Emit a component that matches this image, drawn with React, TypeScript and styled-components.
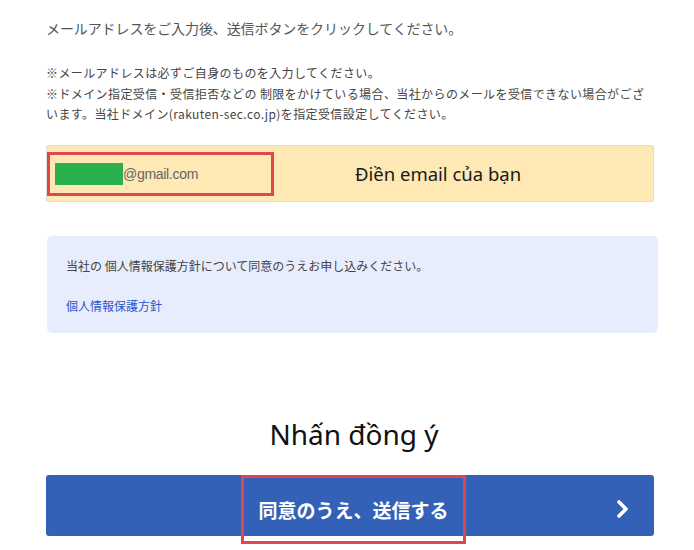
import React from "react";
import styled, { createGlobalStyle } from "styled-components";

const Global = createGlobalStyle`
  html, body { margin: 0; padding: 0; background: #ffffff; }
  body { font-family: "Noto Sans CJK JP", "Noto Sans", sans-serif; }
`;

const Page = styled.div`
  width: 694px;
  height: 550px;
  box-sizing: border-box;
  padding: 0 40px 0 46px;
  overflow: hidden;
  display: flex;
  flex-direction: column;
`;

const Lead = styled.p`
  margin: 17px 0 0;
  font-size: 14px;
  line-height: 22px;
  color: #555555;
  font-family: "Noto Sans CJK JP", sans-serif;
  letter-spacing: -0.1px;
`;

const Notes = styled.p`
  margin: 24px 0 0;
  font-size: 12px;
  line-height: 20.5px;
  color: #444444;
  font-family: "Noto Sans CJK JP", sans-serif;
  letter-spacing: 0.4px;
`;

const EmailBox = styled.div`
  margin-top: 20px;
  width: 608px;
  height: 57px;
  box-sizing: border-box;
  background: #fee8b4;
  border: 1px solid #dddddd;
  border-radius: 2px;
  display: flex;
  align-items: flex-start;
`;

const EmailField = styled.div`
  margin-top: 6px;
  width: 227px;
  height: 44px;
  box-sizing: border-box;
  border: 3px solid #e0464f;
  padding: 0 5px;
  display: flex;
  align-items: center;
`;

const Masked = styled.span`
  display: block;
  width: 68px;
  height: 22px;
  background: #2bb04e;
`;

const Domain = styled.span`
  font-family: "Liberation Sans", sans-serif;
  font-size: 14px;
  color: #666666;
  letter-spacing: -0.3px;
`;

const Hint = styled.span`
  margin: 0 0 0 81px;
  align-self: center;
  font-family: "Noto Sans", sans-serif;
  font-size: 18.5px;
  color: #1a1a1a;
`;

const Consent = styled.div`
  margin: 34px 0 0 1px;
  width: 611px;
  height: 97px;
  box-sizing: border-box;
  background: #e8edfd;
  border-radius: 5px;
  padding: 19px 19px 0;
  display: flex;
  flex-direction: column;
`;

const ConsentText = styled.p`
  margin: 0;
  font-size: 12px;
  line-height: 22px;
  color: #444444;
`;

const PolicyLink = styled.a`
  margin-top: 18px;
  font-size: 12px;
  line-height: 22px;
  color: #2b57cc;
  text-decoration: none;
  align-self: flex-start;
`;

const Callout = styled.div`
  margin-top: 83px;
  width: 608px;
  text-align: center;
  font-family: "Noto Sans", sans-serif;
  font-size: 28px;
  line-height: 36px;
  color: #111111;
  padding-left: 8px;
  box-sizing: border-box;
`;

const SubmitButton = styled.button`
  margin-top: 23px;
  width: 608px;
  height: 61px;
  box-sizing: border-box;
  border: none;
  border-radius: 3px;
  background: #3461b8;
  padding: 0 24px;
  display: grid;
  grid-template-columns: 1fr auto 1fr;
  align-items: center;
  cursor: pointer;
`;

const ButtonLabel = styled.span`
  grid-column: 2;
  margin-left: 7px;
  width: 225px;
  height: 69px;
  box-sizing: border-box;
  border: 3px solid #e0464f;
  display: flex;
  align-items: center;
  justify-content: center;
  font-family: "Noto Sans CJK JP", sans-serif;
  font-weight: 700;
  font-size: 19px;
  color: #ffffff;
`;

const Chevron = styled.svg`
  grid-column: 3;
  justify-self: end;
  width: 14px;
  height: 20px;
`;

export default function App() {
  return (
    <>
      <Global />
      <Page>
        <Lead>メールアドレスをご入力後、送信ボタンをクリックしてください。</Lead>
        <Notes>
          ※メールアドレスは必ずご自身のものを入力してください。
          <br />
          ※ドメイン指定受信・受信拒否などの 制限をかけている場合、当社からのメールを受信できない場合がござ
          <br />
          います。当社ドメイン(rakuten-sec.co.jp)を指定受信設定してください。
        </Notes>
        <EmailBox>
          <EmailField>
            <Masked />
            <Domain>@gmail.com</Domain>
          </EmailField>
          <Hint>Điền email của bạn</Hint>
        </EmailBox>
        <Consent>
          <ConsentText>当社の 個人情報保護方針について同意のうえお申し込みください。</ConsentText>
          <PolicyLink href="#">個人情報保護方針</PolicyLink>
        </Consent>
        <Callout>Nhấn đồng ý</Callout>
        <SubmitButton type="button">
          <ButtonLabel>同意のうえ、送信する</ButtonLabel>
          <Chevron viewBox="0 0 14 20">
            <polyline
              points="3,3 10,10 3,17"
              fill="none"
              stroke="#ffffff"
              strokeWidth="3.6"
              strokeLinecap="round"
              strokeLinejoin="round"
            />
          </Chevron>
        </SubmitButton>
      </Page>
    </>
  );
}
